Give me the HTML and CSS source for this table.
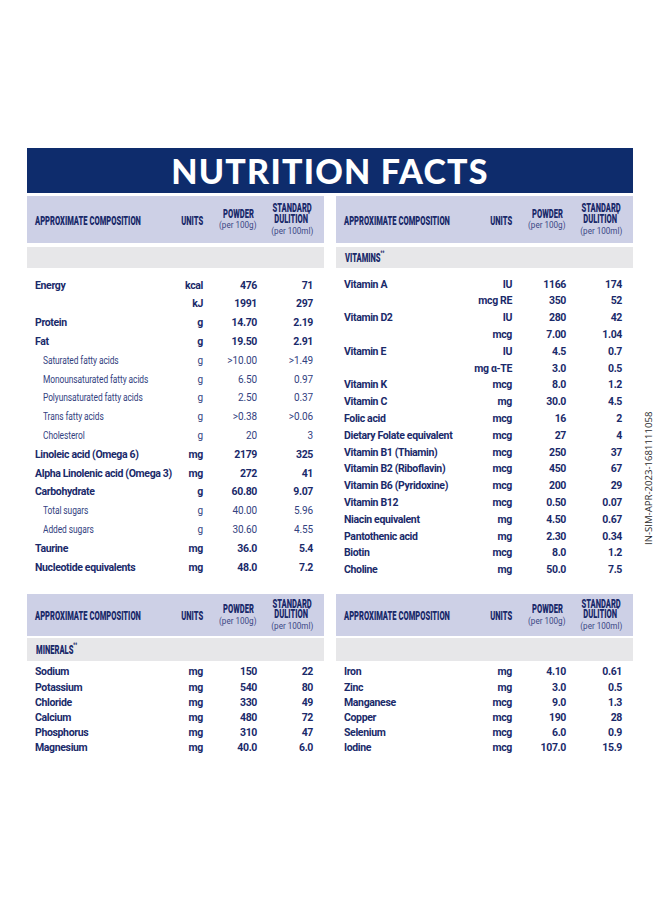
FILE: index.html
```html
<!DOCTYPE html>
<html lang="en">
<head>
<meta charset="utf-8">
<title>Nutrition Facts</title>
<link rel="stylesheet" href="styles.css">
</head>
<body>
<div class="page">
  <h1 class="banner">NUTRITION FACTS</h1>

  <div class="grid top">
    <section class="tbl">
      <div class="thead">
        <span class="h-name"><span class="cond">APPROXIMATE COMPOSITION</span></span>
        <span class="h-unit"><span class="cond">UNITS</span></span>
        <span class="h-col pw"><span class="cond">POWDER</span><span class="per">(per 100g)</span></span>
        <span class="h-col sd"><span class="cond">STANDARD<br>DULITION<sup>*</sup></span><span class="per">(per 100ml)</span></span>
      </div>
      <div class="group"></div>
      <div class="rows r188">
        <div class="row"><span>Energy</span><span>kcal</span><span>476</span><span>71</span></div>
        <div class="row"><span></span><span>kJ</span><span>1991</span><span>297</span></div>
        <div class="row"><span>Protein</span><span>g</span><span>14.70</span><span>2.19</span></div>
        <div class="row"><span>Fat</span><span>g</span><span>19.50</span><span>2.91</span></div>
        <div class="row sub"><span>Saturated fatty acids</span><span>g</span><span>&gt;10.00</span><span>&gt;1.49</span></div>
        <div class="row sub"><span>Monounsaturated fatty acids</span><span>g</span><span>6.50</span><span>0.97</span></div>
        <div class="row sub"><span>Polyunsaturated fatty acids</span><span>g</span><span>2.50</span><span>0.37</span></div>
        <div class="row sub"><span>Trans fatty acids</span><span>g</span><span>&gt;0.38</span><span>&gt;0.06</span></div>
        <div class="row sub"><span>Cholesterol</span><span>g</span><span>20</span><span>3</span></div>
        <div class="row"><span>Linoleic acid (Omega 6)</span><span>mg</span><span>2179</span><span>325</span></div>
        <div class="row"><span>Alpha Linolenic acid (Omega 3)</span><span>mg</span><span>272</span><span>41</span></div>
        <div class="row"><span>Carbohydrate</span><span>g</span><span>60.80</span><span>9.07</span></div>
        <div class="row sub"><span>Total sugars</span><span>g</span><span>40.00</span><span>5.96</span></div>
        <div class="row sub"><span>Added sugars</span><span>g</span><span>30.60</span><span>4.55</span></div>
        <div class="row"><span>Taurine</span><span>mg</span><span>36.0</span><span>5.4</span></div>
        <div class="row"><span>Nucleotide equivalents</span><span>mg</span><span>48.0</span><span>7.2</span></div>
      </div>
    </section>

    <section class="tbl">
      <div class="thead">
        <span class="h-name"><span class="cond">APPROXIMATE COMPOSITION</span></span>
        <span class="h-unit"><span class="cond">UNITS</span></span>
        <span class="h-col pw"><span class="cond">POWDER</span><span class="per">(per 100g)</span></span>
        <span class="h-col sd"><span class="cond">STANDARD<br>DULITION<sup>*</sup></span><span class="per">(per 100ml)</span></span>
      </div>
      <div class="group"><span class="cond">VITAMINS<sup>**</sup></span></div>
      <div class="rows r168">
        <div class="row"><span>Vitamin A</span><span>IU</span><span>1166</span><span>174</span></div>
        <div class="row"><span></span><span>mcg RE</span><span>350</span><span>52</span></div>
        <div class="row"><span>Vitamin D2</span><span>IU</span><span>280</span><span>42</span></div>
        <div class="row"><span></span><span>mcg</span><span>7.00</span><span>1.04</span></div>
        <div class="row"><span>Vitamin E</span><span>IU</span><span>4.5</span><span>0.7</span></div>
        <div class="row"><span></span><span>mg α-TE</span><span>3.0</span><span>0.5</span></div>
        <div class="row"><span>Vitamin K</span><span>mcg</span><span>8.0</span><span>1.2</span></div>
        <div class="row"><span>Vitamin C</span><span>mg</span><span>30.0</span><span>4.5</span></div>
        <div class="row"><span>Folic acid</span><span>mcg</span><span>16</span><span>2</span></div>
        <div class="row"><span>Dietary Folate equivalent</span><span>mcg</span><span>27</span><span>4</span></div>
        <div class="row"><span>Vitamin B1 (Thiamin)</span><span>mcg</span><span>250</span><span>37</span></div>
        <div class="row"><span>Vitamin B2 (Riboflavin)</span><span>mcg</span><span>450</span><span>67</span></div>
        <div class="row"><span>Vitamin B6 (Pyridoxine)</span><span>mcg</span><span>200</span><span>29</span></div>
        <div class="row"><span>Vitamin B12</span><span>mcg</span><span>0.50</span><span>0.07</span></div>
        <div class="row"><span>Niacin equivalent</span><span>mg</span><span>4.50</span><span>0.67</span></div>
        <div class="row"><span>Pantothenic acid</span><span>mg</span><span>2.30</span><span>0.34</span></div>
        <div class="row"><span>Biotin</span><span>mcg</span><span>8.0</span><span>1.2</span></div>
        <div class="row"><span>Choline</span><span>mg</span><span>50.0</span><span>7.5</span></div>
      </div>
    </section>
  </div>

  <div class="grid bottom">
    <section class="tbl small">
      <div class="thead">
        <span class="h-name"><span class="cond">APPROXIMATE COMPOSITION</span></span>
        <span class="h-unit"><span class="cond">UNITS</span></span>
        <span class="h-col pw"><span class="cond">POWDER</span><span class="per">(per 100g)</span></span>
        <span class="h-col sd"><span class="cond">STANDARD<br>DULITION<sup>*</sup></span><span class="per">(per 100ml)</span></span>
      </div>
      <div class="group"><span class="cond">MINERALS<sup>**</sup></span></div>
      <div class="rows r152">
        <div class="row"><span>Sodium</span><span>mg</span><span>150</span><span>22</span></div>
        <div class="row"><span>Potassium</span><span>mg</span><span>540</span><span>80</span></div>
        <div class="row"><span>Chloride</span><span>mg</span><span>330</span><span>49</span></div>
        <div class="row"><span>Calcium</span><span>mg</span><span>480</span><span>72</span></div>
        <div class="row"><span>Phosphorus</span><span>mg</span><span>310</span><span>47</span></div>
        <div class="row"><span>Magnesium</span><span>mg</span><span>40.0</span><span>6.0</span></div>
      </div>
    </section>

    <section class="tbl small">
      <div class="thead">
        <span class="h-name"><span class="cond">APPROXIMATE COMPOSITION</span></span>
        <span class="h-unit"><span class="cond">UNITS</span></span>
        <span class="h-col pw"><span class="cond">POWDER</span><span class="per">(per 100g)</span></span>
        <span class="h-col sd"><span class="cond">STANDARD<br>DULITION<sup>*</sup></span><span class="per">(per 100ml)</span></span>
      </div>
      <div class="group"></div>
      <div class="rows r152">
        <div class="row"><span>Iron</span><span>mg</span><span>4.10</span><span>0.61</span></div>
        <div class="row"><span>Zinc</span><span>mg</span><span>3.0</span><span>0.5</span></div>
        <div class="row"><span>Manganese</span><span>mcg</span><span>9.0</span><span>1.3</span></div>
        <div class="row"><span>Copper</span><span>mcg</span><span>190</span><span>28</span></div>
        <div class="row"><span>Selenium</span><span>mcg</span><span>6.0</span><span>0.9</span></div>
        <div class="row"><span>Iodine</span><span>mcg</span><span>107.0</span><span>15.9</span></div>
      </div>
    </section>
  </div>

  <div class="code">IN-SIM-APR-2023-1681111058</div>
</div>
</body>
</html>
```

FILE: styles.css
```css
* { box-sizing: border-box; }

html, body {
  margin: 0;
  padding: 0;
  background: #ffffff;
}

.page {
  position: relative;
  width: 660px;
  height: 900px;
  padding: 148px 27px 0 27px;
  font-family: Roboto, "Liberation Sans", sans-serif;
  color: #1a2a6a;
}

.banner {
  margin: 0;
  height: 45px;
  background: #0e2c6c;
  color: #ffffff;
  font-family: Lato, "Liberation Sans", sans-serif;
  font-weight: 900;
  font-size: 34px;
  line-height: 46px;
  letter-spacing: 1.2px;
  text-align: center;
}

.grid {
  display: grid;
  grid-template-columns: 297px 297px;
  column-gap: 12px;
  align-items: start;
}

.grid.top { margin-top: 3px; }
.grid.bottom { margin-top: 15px; }

.thead,
.row {
  display: grid;
  grid-template-columns: minmax(0, 1fr) 48px 54px 56px;
  padding: 0 11px 0 8px;
}

.thead {
  height: 47px;
  background: #cdd0e6;
  align-items: center;
}

.small .thead { height: 42px; }

.cond {
  display: inline-block;
  font-family: Roboto, "Liberation Sans", sans-serif;
  font-weight: 900;
  font-size: 13.5px;
  line-height: 10.8px;
  white-space: nowrap;
  text-align: center;
  transform: scaleX(0.56);
  color: #1a2a6a;
}

.h-name .cond,
.group .cond { transform-origin: left center; }

.h-unit { justify-self: end; }
.h-unit .cond { transform-origin: right center; }

.h-col {
  justify-self: end;
  display: flex;
  flex-direction: column;
  align-items: center;
}

.h-col.pw { width: 38px; }
.h-col.sd { width: 42px; }

.h-col .cond { transform-origin: center center; }

.h-col .per {
  font-size: 9px;
  line-height: 11px;
  font-weight: 400;
  white-space: nowrap;
  color: #3b4785;
  transform: scaleX(0.9);
  margin-top: 2px;
}

.cond sup {
  font-size: 7px;
  line-height: 0;
  vertical-align: top;
  position: relative;
  top: 1px;
}

.group {
  height: 21px;
  margin-top: 4px;
  background: #e7e7e9;
  padding-left: 9px;
  display: flex;
  align-items: center;
}

.small .group {
  height: 23px;
  margin-top: 2px;
}

.rows { padding-top: 8.6px; }
.small .rows { padding-top: 3.4px; }

.row {
  font-size: 10.5px;
  font-weight: 700;
  letter-spacing: -0.35px;
  white-space: nowrap;
}

.r188 .row { height: 18.8px; line-height: 18.8px; }
.r168 .row { height: 16.8px; line-height: 16.8px; }
.r152 .row { height: 15.2px; line-height: 15.2px; }

.row span:nth-child(n+2) { text-align: right; }

.row.sub {
  font-size: 10px;
  font-weight: 400;
  letter-spacing: -0.1px;
  color: #33427f;
}

.row.sub span:first-child {
  margin-left: 8px;
  transform: scaleX(0.84);
  transform-origin: left center;
}

.code {
  position: absolute;
  left: 643px;
  top: 545px;
  transform-origin: 0 0;
  transform: rotate(-90deg);
  font-family: "Open Sans", sans-serif;
  font-size: 9.6px;
  line-height: 12px;
  color: #2a2a2a;
  white-space: nowrap;
}
```
